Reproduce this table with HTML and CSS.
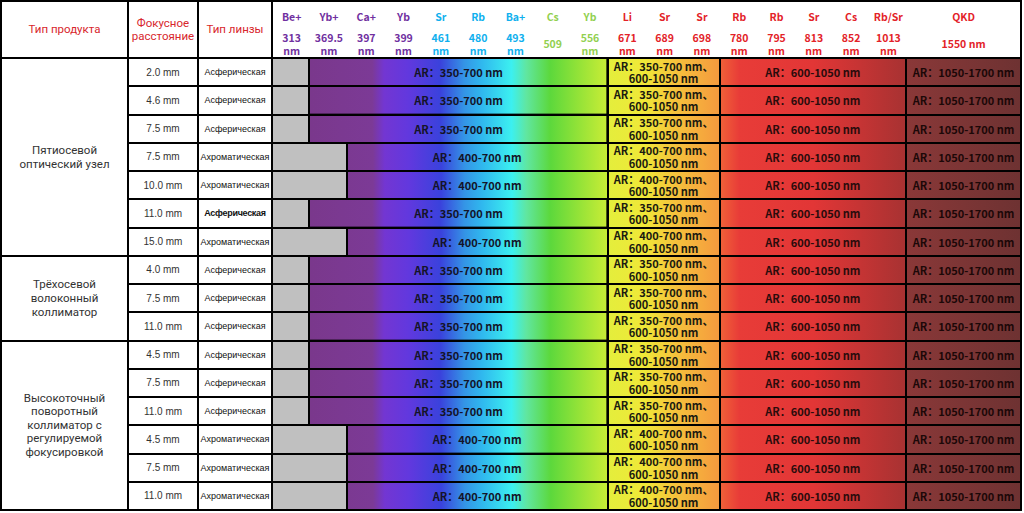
FILE: index.html
```html
<!DOCTYPE html>
<html lang="ru">
<head>
<meta charset="utf-8">
<title>Спектральная таблица</title>
<link rel="stylesheet" href="styles.css">
</head>
<body>
<div class="sheet">
  <div class="hcell">Тип продукта</div>
  <div class="hcell">Фокусное<br>расстояние</div>
  <div class="hcell">Тип линзы</div>
  <div class="hspec">
    <div class="wl purple"><span class="el">Be+</span><span class="val">313 nm</span></div>
    <div class="wl purple"><span class="el">Yb+</span><span class="val">369.5 nm</span></div>
    <div class="wl purple"><span class="el">Ca+</span><span class="val">397 nm</span></div>
    <div class="wl purple"><span class="el">Yb</span><span class="val">399 nm</span></div>
    <div class="wl blue"><span class="el">Sr</span><span class="val">461 nm</span></div>
    <div class="wl blue"><span class="el">Rb</span><span class="val">480 nm</span></div>
    <div class="wl blue"><span class="el">Ba+</span><span class="val">493 nm</span></div>
    <div class="wl green"><span class="el">Cs</span><span class="val">509</span></div>
    <div class="wl green"><span class="el">Yb</span><span class="val">556 nm</span></div>
    <div class="wl red"><span class="el">Li</span><span class="val">671 nm</span></div>
    <div class="wl red"><span class="el">Sr</span><span class="val">689 nm</span></div>
    <div class="wl red"><span class="el">Sr</span><span class="val">698 nm</span></div>
    <div class="wl red"><span class="el">Rb</span><span class="val">780 nm</span></div>
    <div class="wl red"><span class="el">Rb</span><span class="val">795 nm</span></div>
    <div class="wl red"><span class="el">Sr</span><span class="val">813 nm</span></div>
    <div class="wl red"><span class="el">Cs</span><span class="val">852 nm</span></div>
    <div class="wl red"><span class="el">Rb/Sr</span><span class="val">1013 nm</span></div>
    <div class="wl red wide"><span class="el">QKD</span><span class="val">1550 nm</span></div>
  </div>

  <!-- Group 1 -->
  <div class="product span7">Пятиосевой<br>оптический узел</div>
  <div class="focal">2.0 mm</div><div class="lens">Асферическая</div>
  <div class="gray g1"></div><div class="spec s8">AR：350-700 nm</div>
  <div class="yel">AR：350-700 nm、600-1050 nm</div><div class="redc">AR：600-1050 nm</div><div class="dark">AR：1050-1700 nm</div>

  <div class="focal">4.6 mm</div><div class="lens">Асферическая</div>
  <div class="gray g1"></div><div class="spec s8">AR：350-700 nm</div>
  <div class="yel">AR：350-700 nm、600-1050 nm</div><div class="redc">AR：600-1050 nm</div><div class="dark">AR：1050-1700 nm</div>

  <div class="focal">7.5 mm</div><div class="lens">Асферическая</div>
  <div class="gray g1"></div><div class="spec s8">AR：350-700 nm</div>
  <div class="yel">AR：350-700 nm、600-1050 nm</div><div class="redc">AR：600-1050 nm</div><div class="dark">AR：1050-1700 nm</div>

  <div class="focal">7.5 mm</div><div class="lens">Ахроматическая</div>
  <div class="gray g2"></div><div class="spec s7">AR：400-700 nm</div>
  <div class="yel">AR：400-700 nm、600-1050 nm</div><div class="redc">AR：600-1050 nm</div><div class="dark">AR：1050-1700 nm</div>

  <div class="focal">10.0 mm</div><div class="lens">Ахроматическая</div>
  <div class="gray g2"></div><div class="spec s7">AR：400-700 nm</div>
  <div class="yel">AR：400-700 nm、600-1050 nm</div><div class="redc">AR：600-1050 nm</div><div class="dark">AR：1050-1700 nm</div>

  <div class="focal">11.0 mm</div><div class="lens strong">Асферическая</div>
  <div class="gray g1"></div><div class="spec s8">AR：350-700 nm</div>
  <div class="yel">AR：350-700 nm、600-1050 nm</div><div class="redc">AR：600-1050 nm</div><div class="dark">AR：1050-1700 nm</div>

  <div class="focal">15.0 mm</div><div class="lens">Ахроматическая</div>
  <div class="gray g2"></div><div class="spec s7">AR：400-700 nm</div>
  <div class="yel">AR：400-700 nm、600-1050 nm</div><div class="redc">AR：600-1050 nm</div><div class="dark">AR：1050-1700 nm</div>

  <!-- Group 2 -->
  <div class="product span3">Трёхосевой<br>волоконный<br>коллиматор</div>
  <div class="focal">4.0 mm</div><div class="lens">Асферическая</div>
  <div class="gray g1"></div><div class="spec s8">AR：350-700 nm</div>
  <div class="yel">AR：350-700 nm、600-1050 nm</div><div class="redc">AR：600-1050 nm</div><div class="dark">AR：1050-1700 nm</div>

  <div class="focal">7.5 mm</div><div class="lens">Асферическая</div>
  <div class="gray g1"></div><div class="spec s8">AR：350-700 nm</div>
  <div class="yel">AR：350-700 nm、600-1050 nm</div><div class="redc">AR：600-1050 nm</div><div class="dark">AR：1050-1700 nm</div>

  <div class="focal">11.0 mm</div><div class="lens">Асферическая</div>
  <div class="gray g1"></div><div class="spec s8">AR：350-700 nm</div>
  <div class="yel">AR：350-700 nm、600-1050 nm</div><div class="redc">AR：600-1050 nm</div><div class="dark">AR：1050-1700 nm</div>

  <!-- Group 3 -->
  <div class="product span6">Высокоточный<br>поворотный<br>коллиматор с<br>регулируемой<br>фокусировкой</div>
  <div class="focal">4.5 mm</div><div class="lens">Асферическая</div>
  <div class="gray g1"></div><div class="spec s8">AR：350-700 nm</div>
  <div class="yel">AR：350-700 nm、600-1050 nm</div><div class="redc">AR：600-1050 nm</div><div class="dark">AR：1050-1700 nm</div>

  <div class="focal">7.5 mm</div><div class="lens">Асферическая</div>
  <div class="gray g1"></div><div class="spec s8">AR：350-700 nm</div>
  <div class="yel">AR：350-700 nm、600-1050 nm</div><div class="redc">AR：600-1050 nm</div><div class="dark">AR：1050-1700 nm</div>

  <div class="focal">11.0 mm</div><div class="lens">Асферическая</div>
  <div class="gray g1"></div><div class="spec s8">AR：350-700 nm</div>
  <div class="yel">AR：350-700 nm、600-1050 nm</div><div class="redc">AR：600-1050 nm</div><div class="dark">AR：1050-1700 nm</div>

  <div class="focal">4.5 mm</div><div class="lens">Ахроматическая</div>
  <div class="gray g2"></div><div class="spec s7">AR：400-700 nm</div>
  <div class="yel">AR：400-700 nm、600-1050 nm</div><div class="redc">AR：600-1050 nm</div><div class="dark">AR：1050-1700 nm</div>

  <div class="focal">7.5 mm</div><div class="lens">Ахроматическая</div>
  <div class="gray g2"></div><div class="spec s7">AR：400-700 nm</div>
  <div class="yel">AR：400-700 nm、600-1050 nm</div><div class="redc">AR：600-1050 nm</div><div class="dark">AR：1050-1700 nm</div>

  <div class="focal">11.0 mm</div><div class="lens">Ахроматическая</div>
  <div class="gray g2"></div><div class="spec s7">AR：400-700 nm</div>
  <div class="yel">AR：400-700 nm、600-1050 nm</div><div class="redc">AR：600-1050 nm</div><div class="dark">AR：1050-1700 nm</div>
</div>
</body>
</html>
```

FILE: styles.css
```css
html, body {
  margin: 0;
  padding: 0;
  background: #ffffff;
}

.sheet {
  display: grid;
  grid-template-columns: 125px 68px 72px repeat(17, 35.3px) 113px;
  grid-template-rows: 55px repeat(16, 26.25px);
  gap: 2px;
  padding: 2px;
  background: #000;
  width: max-content;
  font-family: "Liberation Sans", Arial, sans-serif;
}

.sheet > div {
  display: flex;
  align-items: center;
  justify-content: center;
  text-align: center;
  overflow: hidden;
}

.hcell {
  background: #fff;
  color: #d8262c;
  font-family: Roboto, "Liberation Sans", sans-serif;
  font-size: 11.5px;
  line-height: 13px;
}

.hspec {
  grid-column: 4 / -1;
  background: #fff;
}

.sheet > .hspec {
  display: grid;
  grid-template-columns: repeat(17, 37.3px) 1fr;
  align-items: stretch;
  overflow: visible;
}

.wl {
  display: flex;
  flex-direction: column;
  align-items: center;
  font-family: "Noto Sans CJK SC", "Noto Sans", sans-serif;
  font-weight: 700;
  font-size: 10.5px;
  padding-top: 8px;
}

.wl .el {
  line-height: 14px;
  height: 14px;
  white-space: nowrap;
}

.wl .val {
  margin-top: 8px;
  height: 25px;
  width: 30px;
  display: flex;
  align-items: center;
  justify-content: center;
  line-height: 12.5px;
  text-align: center;
}

.wl.wide .val {
  width: auto;
  white-space: nowrap;
}

.purple { color: #7030a0; }
.blue { color: #10b0ee; }
.green { color: #92d050; }
.red { color: #e32228; }

.product {
  grid-column: 1;
  background: #fff;
  color: #333;
  font-family: Roboto, "Liberation Sans", sans-serif;
  font-size: 11.5px;
  line-height: 14px;
}

.span7 { grid-row: span 7; }
.span3 { grid-row: span 3; }
.span6 { grid-row: span 6; line-height: 13.5px; }

.focal {
  grid-column: 2;
  background: #fff;
  color: #333;
  font-family: "Liberation Sans", Arial, sans-serif;
  font-size: 10px;
}

.lens {
  background: #fff;
  color: #111;
  font-family: "Liberation Sans", Arial, sans-serif;
  font-size: 9px;
  white-space: nowrap;
}

.lens.strong { font-weight: 700; letter-spacing: -0.3px; }

.gray { background: #c0c0c0; }
.g1 { grid-column: span 1; }
.g2 { grid-column: span 2; }

.spec, .yel, .redc, .dark {
  font-family: "Noto Sans CJK SC", "Noto Sans", sans-serif;
  font-weight: 700;
  font-size: 11px;
  white-space: nowrap;
}

.spec {
  color: #141428;
  background-image: linear-gradient(to right,
    #7a388c 0%,
    #7c3a96 21%,
    #7336d2 25%,
    #6238de 33%,
    #3a42dc 44%,
    #3494e6 52%,
    #30b8ee 58%,
    #3cf0f0 68%,
    #60e6a0 73%,
    #5cd83c 81%,
    #90e238 90%,
    #c8ec36 100%);
  background-size: 296.4px 100%;
  background-position: right center;
  background-repeat: no-repeat;
}

.s8 { grid-column: span 8; }
.s7 { grid-column: span 7; }

.sheet > .yel {
  grid-column: span 3;
  color: #1a1a10;
  line-height: 12.5px;
  white-space: normal;
  padding: 0 4px;
  background: linear-gradient(to right, #e4ee3c 0%, #f0e838 32%, #f5c23c 60%, #f59a3e 100%);
}

.redc {
  grid-column: span 5;
  color: #2a0c0c;
  background: linear-gradient(to right, #f06038 0%, #e83c38 10%, #e23636 50%, #c63434 75%, #a83232 100%);
}

.dark {
  color: #1c0808;
  background: linear-gradient(to right, #8a3838 0%, #6e3232 100%);
}
```
